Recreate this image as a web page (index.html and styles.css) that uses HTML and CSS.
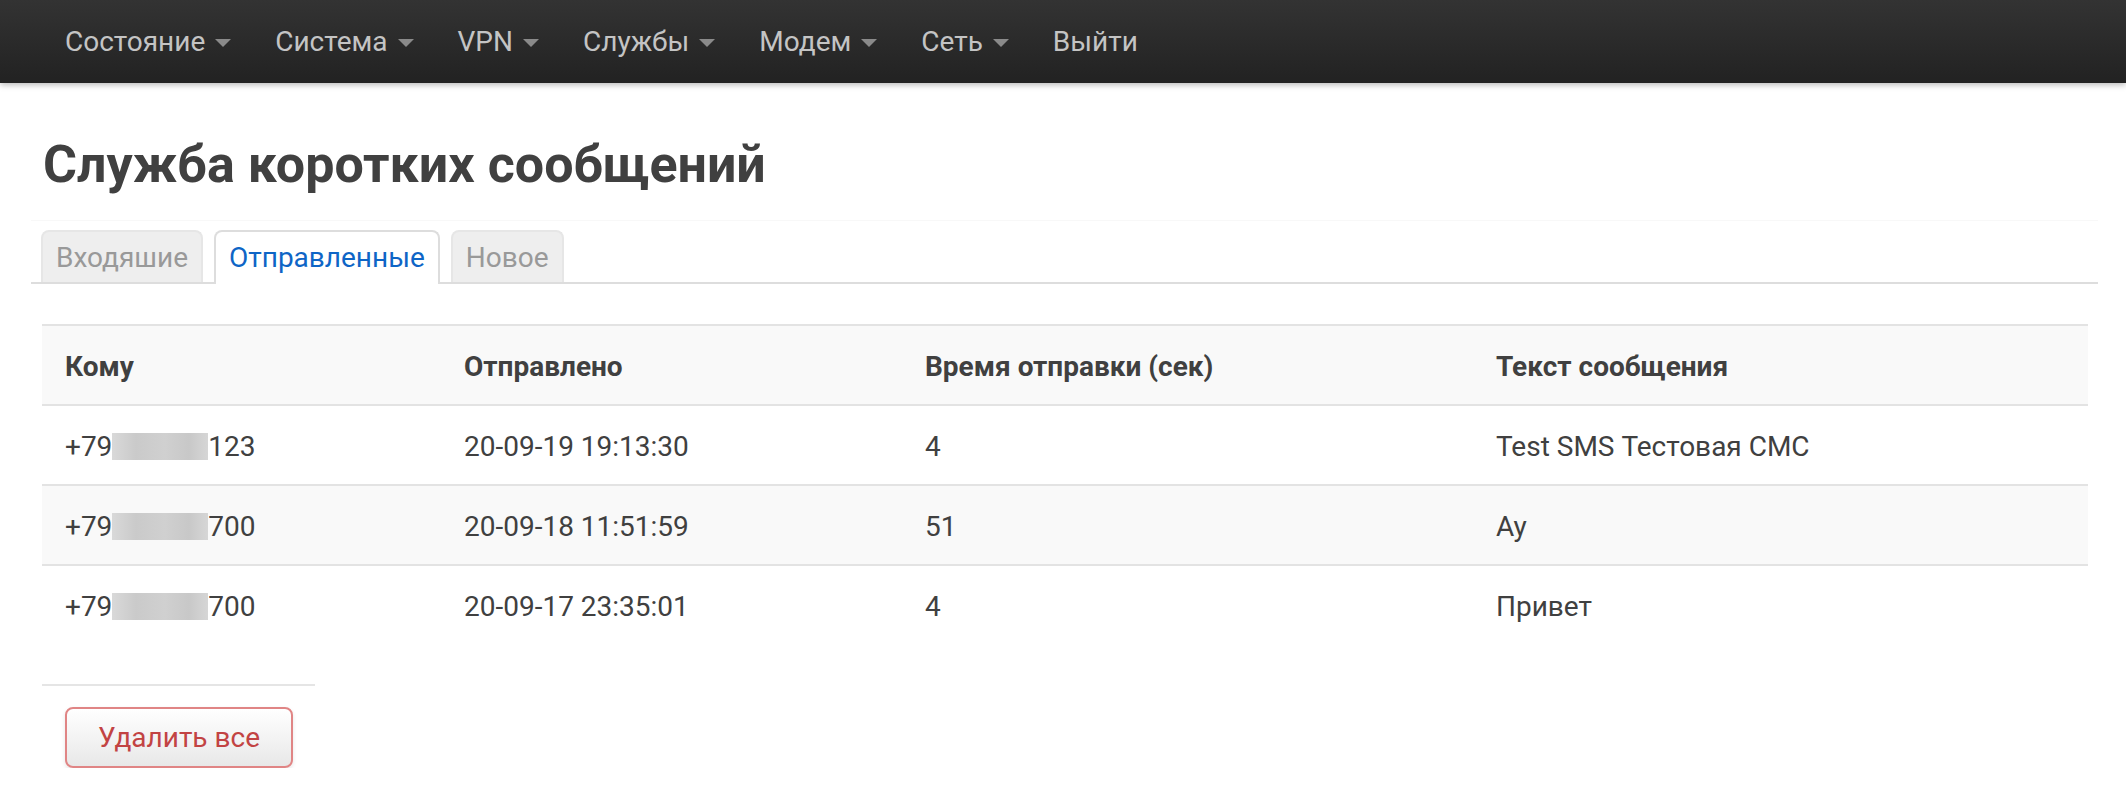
FILE: index.html
```html
<!DOCTYPE html>
<html lang="ru">
<head>
<meta charset="utf-8">
<title>Служба коротких сообщений</title>
<link rel="stylesheet" href="styles.css">
</head>
<body>
<header class="navbar">
  <ul class="nav">
    <li><a href="#">Состояние<span class="caret"></span></a></li>
    <li><a href="#">Система<span class="caret"></span></a></li>
    <li><a href="#">VPN<span class="caret"></span></a></li>
    <li><a href="#">Службы<span class="caret"></span></a></li>
    <li><a href="#">Модем<span class="caret"></span></a></li>
    <li><a href="#">Сеть<span class="caret"></span></a></li>
    <li><a href="#">Выйти</a></li>
  </ul>
</header>
<main class="container">
  <h1 class="title">Служба коротких сообщений</h1>
  <ul class="tabs">
    <li class="tab"><a href="#">Входяшие</a></li>
    <li class="tab active"><a href="#">Отправленные</a></li>
    <li class="tab"><a href="#">Новое</a></li>
  </ul>
  <div class="content">
    <table class="sms">
      <colgroup>
        <col class="c1"><col class="c2"><col class="c3"><col class="c4">
      </colgroup>
      <thead>
        <tr><th>Кому</th><th>Отправлено</th><th>Время отправки (сек)</th><th>Текст сообщения</th></tr>
      </thead>
      <tbody>
        <tr><td>+79<span class="mask"></span>123</td><td>20-09-19 19:13:30</td><td>4</td><td>Test SMS Тестовая СМС</td></tr>
        <tr class="odd"><td>+79<span class="mask"></span>700</td><td>20-09-18 11:51:59</td><td>51</td><td>Ау</td></tr>
        <tr><td>+79<span class="mask"></span>700</td><td>20-09-17 23:35:01</td><td>4</td><td>Привет</td></tr>
      </tbody>
    </table>
    <div class="actions">
      <button class="btn-danger" type="button">Удалить все</button>
    </div>
  </div>
</main>
</body>
</html>
```
FILE: styles.css
```css
html, body {
  margin: 0;
  padding: 0;
  background: #fff;
}
body {
  font-family: Roboto, "Noto Sans", "Liberation Sans", sans-serif;
  color: #404040;
  font-size: 28px;
}
.navbar {
  height: 83px;
  background: linear-gradient(#333333, #222222);
  box-shadow: 0 2px 6px rgba(0, 0, 0, 0.28);
  display: flex;
  align-items: center;
}
.nav {
  list-style: none;
  margin: 0;
  padding: 0 0 0 43px;
  display: flex;
}
.nav a {
  display: flex;
  align-items: center;
  padding: 0 22px;
  color: #c4c4c4;
  text-decoration: none;
  font-size: 28px;
  line-height: 40px;
}
.caret {
  width: 0;
  height: 0;
  margin-left: 10px;
  margin-top: 3px;
  border-left: 8px solid transparent;
  border-right: 8px solid transparent;
  border-top: 8px solid #8a8a8a;
}
.container {
  padding: 0 28px 0 31px;
}
.title {
  margin: 54px 0 0;
  padding: 0 0 27px 12px;
  font-size: 52px;
  line-height: 56px;
  font-weight: 700;
  color: #404040;
  border-bottom: 1px solid #f8f8f8;
}
.tabs {
  list-style: none;
  margin: 9px 0 0;
  padding: 0 0 0 10px;
  display: flex;
  gap: 11px;
  border-bottom: 2px solid #dddddd;
}
.tab {
  margin-bottom: -2px;
}
.tab a {
  display: block;
  padding: 1px 13px 0;
  line-height: 49px;
  height: 49px;
  font-size: 28px;
  color: #999999;
  text-decoration: none;
  background: #eeeeee;
  border: 2px solid #e6e6e6;
  border-bottom: 0;
  border-radius: 8px 8px 0 0;
}
.tab.active a {
  background: #fff;
  color: #0e65c6;
  border-color: #dddddd;
  height: 51px;
}
.content {
  margin: 40px 10px 0 11px;
}
.sms {
  width: 100%;
  border-collapse: collapse;
  font-size: 28px;
}
.c1 { width: 399px; }
.c2 { width: 461px; }
.c3 { width: 571px; }
.sms th, .sms td {
  text-align: left;
  padding: 3px 23px 0;
  height: 75px;
  border-top: 2px solid #e3e3e3;
  line-height: 36px;
}
.sms th {
  background: #f9f9f9;
  font-weight: 700;
}
.sms tr.odd td {
  background: #f9f9f9;
}
.mask {
  display: inline-block;
  width: 96px;
  height: 27px;
  vertical-align: -4px;
  background: linear-gradient(90deg, #d9d9d9, #cacaca 25%, #d0d0d0 55%, #c8c8c8 80%, #d6d6d6);
}
.actions {
  box-sizing: border-box;
  margin-top: 40px;
  width: 273px;
  border-top: 2px solid #e5e5e5;
  padding: 21px 0 0 23px;
}
.btn-danger {
  width: 228px;
  height: 61px;
  font-family: Roboto, "Noto Sans", "Liberation Sans", sans-serif;
  font-size: 28px;
  color: #c24343;
  background: linear-gradient(#ffffff, #e8e8e8);
  border: 2px solid #e08585;
  border-radius: 8px;
  box-shadow: 0 2px 4px rgba(0, 0, 0, 0.1);
  padding: 0;
}
```
